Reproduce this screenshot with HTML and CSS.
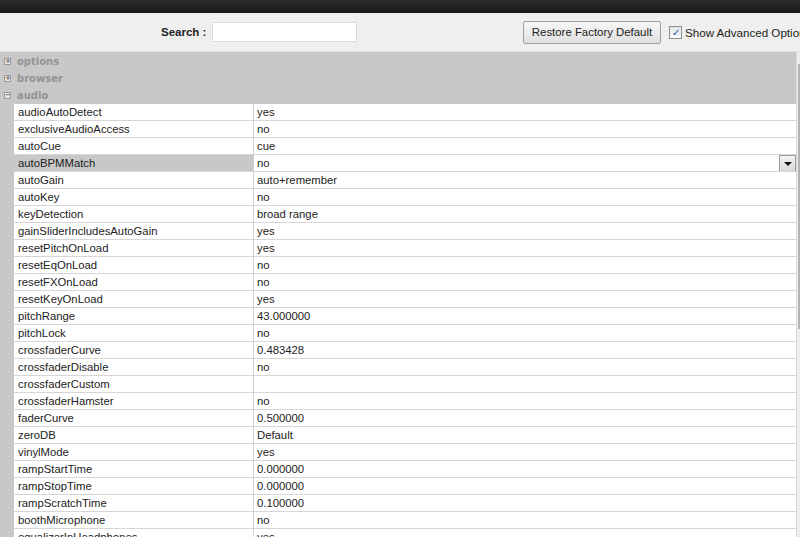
FILE: index.html
```html
<!DOCTYPE html>
<html lang="en">
<head>
    <meta charset="UTF-8">
    <title>Preferences</title>
    <link rel="stylesheet" href="styles.css">
</head>
<body>
    <div class="topbar"></div>
    <div class="toolbar">
        <label class="search-label" for="search">Search :</label>
        <input type="text" id="search" class="search-input">
        <button class="restore">Restore Factory Default</button>
        <label class="advanced"><span class="check">&#10003;</span>Show Advanced Options</label>
    </div>
    <div class="panel">
        <div class="tree">
            <div class="group"><span class="toggle">+</span>options</div>
            <div class="group"><span class="toggle">+</span>browser</div>
            <div class="group"><span class="toggle">&minus;</span>audio</div>
            <table class="props">
                <tr><td class="key">audioAutoDetect</td><td class="val">yes</td></tr>
                <tr><td class="key">exclusiveAudioAccess</td><td class="val">no</td></tr>
                <tr><td class="key">autoCue</td><td class="val">cue</td></tr>
                <tr class="selected"><td class="key">autoBPMMatch</td><td class="val"><div class="select">no<span class="drop"></span></div></td></tr>
                <tr><td class="key">autoGain</td><td class="val">auto+remember</td></tr>
                <tr><td class="key">autoKey</td><td class="val">no</td></tr>
                <tr><td class="key">keyDetection</td><td class="val">broad range</td></tr>
                <tr><td class="key">gainSliderIncludesAutoGain</td><td class="val">yes</td></tr>
                <tr><td class="key">resetPitchOnLoad</td><td class="val">yes</td></tr>
                <tr><td class="key">resetEqOnLoad</td><td class="val">no</td></tr>
                <tr><td class="key">resetFXOnLoad</td><td class="val">no</td></tr>
                <tr><td class="key">resetKeyOnLoad</td><td class="val">yes</td></tr>
                <tr><td class="key">pitchRange</td><td class="val">43.000000</td></tr>
                <tr><td class="key">pitchLock</td><td class="val">no</td></tr>
                <tr><td class="key">crossfaderCurve</td><td class="val">0.483428</td></tr>
                <tr><td class="key">crossfaderDisable</td><td class="val">no</td></tr>
                <tr><td class="key">crossfaderCustom</td><td class="val"></td></tr>
                <tr><td class="key">crossfaderHamster</td><td class="val">no</td></tr>
                <tr><td class="key">faderCurve</td><td class="val">0.500000</td></tr>
                <tr><td class="key">zeroDB</td><td class="val">Default</td></tr>
                <tr><td class="key">vinylMode</td><td class="val">yes</td></tr>
                <tr><td class="key">rampStartTime</td><td class="val">0.000000</td></tr>
                <tr><td class="key">rampStopTime</td><td class="val">0.000000</td></tr>
                <tr><td class="key">rampScratchTime</td><td class="val">0.100000</td></tr>
                <tr><td class="key">boothMicrophone</td><td class="val">no</td></tr>
                <tr><td class="key">equalizerInHeadphones</td><td class="val">yes</td></tr>
            </table>
        </div>
        <div class="scroll"><div class="thumb"></div></div>
    </div>
</body>
</html>
```

FILE: styles.css
```css
html, body {
    margin: 0;
    height: 100%;
    overflow: hidden;
}
body {
    font-family: 'Liberation Sans', Arial, sans-serif;
    font-size: 11.3px;
    color: #222;
    background: #c8c8c8;
    display: flex;
    flex-direction: column;
}
.topbar {
    height: 13px;
    background: linear-gradient(#2a2a2a, #1a1a1a);
    flex: none;
}
.toolbar {
    height: 39px;
    flex: none;
    background: #efefef;
    border-bottom: 1px solid #e2e2e2;
    box-sizing: border-box;
    display: flex;
    align-items: center;
    white-space: nowrap;
}
.search-label {
    font-family: 'Liberation Sans', Arial, sans-serif;
    font-weight: bold;
    font-size: 11.5px;
    color: #222;
    margin-left: 161px;
    width: 44px;
    flex: none;
}
.search-input {
    width: 145px;
    height: 20px;
    flex: none;
    box-sizing: border-box;
    margin: 0 0 0 7px;
    border: 1px solid #dcdcdc;
    background: #fff;
    padding: 0;
}
.restore {
    margin-left: 166px;
    height: 23px;
    width: 138px;
    flex: none;
    box-sizing: border-box;
    padding: 0;
    font-family: 'Liberation Sans', Arial, sans-serif;
    font-size: 11.4px;
    color: #222;
    background: linear-gradient(#f6f6f6, #e0e0e0);
    border: 1px solid #a0a0a0;
    border-radius: 2px;
}
.advanced {
    display: flex;
    align-items: center;
    margin-left: 8px;
    font-size: 11.6px;
    color: #222;
}
.check {
    width: 11px;
    height: 11px;
    border: 1px solid #8e8f8f;
    background: linear-gradient(#e0e4ea, #fafbfc);
    font-size: 10px;
    line-height: 11px;
    text-align: center;
    color: #2a4f9a;
    margin-right: 3px;
}
.panel {
    flex: 1;
    display: flex;
    min-height: 0;
    overflow: hidden;
}
.tree {
    flex: 1;
}
.group {
    height: 17px;
    line-height: 17px;
    font-family: 'DejaVu Sans', Verdana, sans-serif;
    font-weight: bold;
    font-size: 10px;
    color: #939393;
    display: flex;
    align-items: center;
    padding-left: 4px;
}
.group:first-child {
    margin-top: 1px;
}
.toggle {
    width: 5px;
    height: 5px;
    border: 1px solid #9a9a9a;
    background: #e4e4e4;
    font-size: 7px;
    line-height: 5px;
    text-align: center;
    color: #666;
    margin-right: 6px;
    overflow: hidden;
}
.props {
    border-collapse: collapse;
    width: calc(100% - 14px);
    margin-left: 14px;
    background: #fff;
    table-layout: fixed;
}
.props td {
    height: 16px;
    padding: 0 0 0 3px;
    border-bottom: 1px solid #d6d6d6;
    white-space: nowrap;
    overflow: hidden;
}
.props td.key {
    width: 235px;
    padding-left: 4px;
    border-right: 1px solid #d0d0d0;
}
.selected .key {
    background: #c8c8c8;
}
.select {
    position: relative;
    height: 16px;
    line-height: 16px;
}
.drop {
    position: absolute;
    right: 0;
    top: 0;
    width: 15px;
    height: 15px;
    border: 1px solid #9c9c9c;
    background: linear-gradient(#f2f2f2, #d8d8d8);
}
.drop::after {
    content: '';
    position: absolute;
    left: 4px;
    top: 6px;
    border-left: 4px solid transparent;
    border-right: 4px solid transparent;
    border-top: 4px solid #111;
}
.scroll {
    width: 3px;
    flex: none;
    background: #ededed;
    border-left: 1px solid #d8d8d8;
    position: relative;
}
.thumb {
    position: absolute;
    left: 1px;
    top: 12px;
    width: 2px;
    height: 265px;
    background: #b4b4b4;
}
```
